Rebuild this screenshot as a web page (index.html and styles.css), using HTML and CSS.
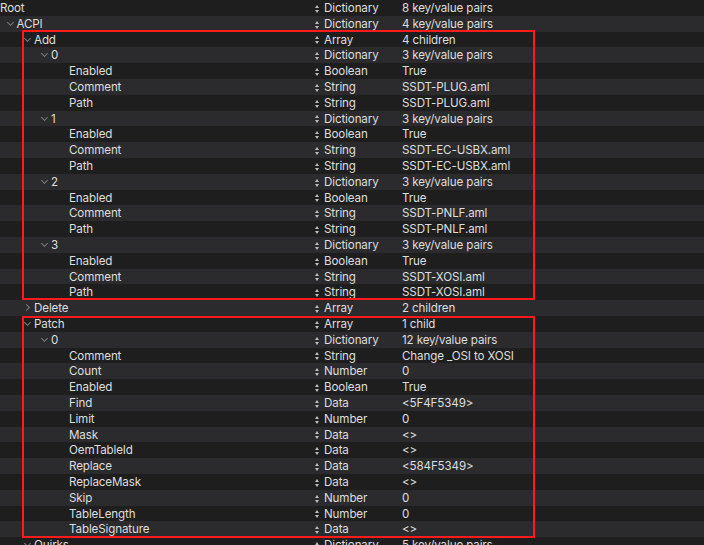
FILE: index.html
```html
<!DOCTYPE html>
<html>
<head>
<meta charset="utf-8">
<link rel="stylesheet" href="styles.css">
</head>
<body>
<div class="outline">
  <div class="row"><div class="key l0">Root</div><div class="type"><i class="ud"></i>Dictionary</div><div class="val">8 key/value pairs</div></div>
  <div class="row"><div class="key l1"><i class="chev down"></i>ACPI</div><div class="type"><i class="ud"></i>Dictionary</div><div class="val">4 key/value pairs</div></div>
  <div class="row"><div class="key l2"><i class="chev down"></i>Add</div><div class="type"><i class="ud"></i>Array</div><div class="val">4 children</div></div>
  <div class="row"><div class="key l3"><i class="chev down"></i>0</div><div class="type"><i class="ud"></i>Dictionary</div><div class="val">3 key/value pairs</div></div>
  <div class="row"><div class="key l4">Enabled</div><div class="type"><i class="ud"></i>Boolean</div><div class="val">True</div></div>
  <div class="row"><div class="key l4">Comment</div><div class="type"><i class="ud"></i>String</div><div class="val">SSDT-PLUG.aml</div></div>
  <div class="row"><div class="key l4">Path</div><div class="type"><i class="ud"></i>String</div><div class="val">SSDT-PLUG.aml</div></div>
  <div class="row"><div class="key l3"><i class="chev down"></i>1</div><div class="type"><i class="ud"></i>Dictionary</div><div class="val">3 key/value pairs</div></div>
  <div class="row"><div class="key l4">Enabled</div><div class="type"><i class="ud"></i>Boolean</div><div class="val">True</div></div>
  <div class="row"><div class="key l4">Comment</div><div class="type"><i class="ud"></i>String</div><div class="val">SSDT-EC-USBX.aml</div></div>
  <div class="row"><div class="key l4">Path</div><div class="type"><i class="ud"></i>String</div><div class="val">SSDT-EC-USBX.aml</div></div>
  <div class="row"><div class="key l3"><i class="chev down"></i>2</div><div class="type"><i class="ud"></i>Dictionary</div><div class="val">3 key/value pairs</div></div>
  <div class="row"><div class="key l4">Enabled</div><div class="type"><i class="ud"></i>Boolean</div><div class="val">True</div></div>
  <div class="row"><div class="key l4">Comment</div><div class="type"><i class="ud"></i>String</div><div class="val">SSDT-PNLF.aml</div></div>
  <div class="row"><div class="key l4">Path</div><div class="type"><i class="ud"></i>String</div><div class="val">SSDT-PNLF.aml</div></div>
  <div class="row"><div class="key l3"><i class="chev down"></i>3</div><div class="type"><i class="ud"></i>Dictionary</div><div class="val">3 key/value pairs</div></div>
  <div class="row"><div class="key l4">Enabled</div><div class="type"><i class="ud"></i>Boolean</div><div class="val">True</div></div>
  <div class="row"><div class="key l4">Comment</div><div class="type"><i class="ud"></i>String</div><div class="val">SSDT-XOSI.aml</div></div>
  <div class="row"><div class="key l4">Path</div><div class="type"><i class="ud"></i>String</div><div class="val">SSDT-XOSI.aml</div></div>
  <div class="row"><div class="key l2"><i class="chev right"></i>Delete</div><div class="type"><i class="ud"></i>Array</div><div class="val">2 children</div></div>
  <div class="row"><div class="key l2"><i class="chev down"></i>Patch</div><div class="type"><i class="ud"></i>Array</div><div class="val">1 child</div></div>
  <div class="row"><div class="key l3"><i class="chev down"></i>0</div><div class="type"><i class="ud"></i>Dictionary</div><div class="val">12 key/value pairs</div></div>
  <div class="row"><div class="key l4">Comment</div><div class="type"><i class="ud"></i>String</div><div class="val">Change _OSI to XOSI</div></div>
  <div class="row"><div class="key l4">Count</div><div class="type"><i class="ud"></i>Number</div><div class="val">0</div></div>
  <div class="row"><div class="key l4">Enabled</div><div class="type"><i class="ud"></i>Boolean</div><div class="val">True</div></div>
  <div class="row"><div class="key l4">Find</div><div class="type"><i class="ud"></i>Data</div><div class="val">&lt;5F4F5349&gt;</div></div>
  <div class="row"><div class="key l4">Limit</div><div class="type"><i class="ud"></i>Number</div><div class="val">0</div></div>
  <div class="row"><div class="key l4">Mask</div><div class="type"><i class="ud"></i>Data</div><div class="val">&lt;&gt;</div></div>
  <div class="row"><div class="key l4">OemTableId</div><div class="type"><i class="ud"></i>Data</div><div class="val">&lt;&gt;</div></div>
  <div class="row"><div class="key l4">Replace</div><div class="type"><i class="ud"></i>Data</div><div class="val">&lt;584F5349&gt;</div></div>
  <div class="row"><div class="key l4">ReplaceMask</div><div class="type"><i class="ud"></i>Data</div><div class="val">&lt;&gt;</div></div>
  <div class="row"><div class="key l4">Skip</div><div class="type"><i class="ud"></i>Number</div><div class="val">0</div></div>
  <div class="row"><div class="key l4">TableLength</div><div class="type"><i class="ud"></i>Number</div><div class="val">0</div></div>
  <div class="row"><div class="key l4">TableSignature</div><div class="type"><i class="ud"></i>Data</div><div class="val">&lt;&gt;</div></div>
  <div class="row"><div class="key l2"><i class="chev down"></i>Quirks</div><div class="type"><i class="ud"></i>Dictionary</div><div class="val">5 key/value pairs</div></div>
  <div class="row"><div class="key l2">&nbsp;</div><div class="type"></div><div class="val"></div></div>

  <div class="mark mark-add"></div>
  <div class="mark mark-patch"></div>
</div>
</body>
</html>
```
FILE: styles.css
```css
html, body {
  margin: 0;
  padding: 0;
  background: #1e1e1e;
  overflow: hidden;
}
body {
  font-family: Inter, "Noto Sans", "Liberation Sans", sans-serif;
  font-size: 11.6px;
  letter-spacing: -0.12px;
  color: #dedede;
}
.outline {
  position: relative;
  width: 704px;
}
.row {
  display: grid;
  grid-template-columns: 314px 88px 1fr;
  height: 15.8px;
  line-height: 15.8px;
  white-space: nowrap;
}
.row > div {
  padding-top: 1px;
  box-sizing: border-box;
}
.row:nth-child(even) {
  background: #2b2b2d;
}
.key {
  display: flex;
  align-items: center;
  position: relative;
}
.l0 { padding-left: 0; }
.l1 { padding-left: 16.5px; }
.l2 { padding-left: 34px; }
.l3 { padding-left: 51px; }
.l4 { padding-left: 69px; }
.chev {
  position: absolute;
  top: 5px;
  width: 7px;
  height: 7px;
}
.l1 .chev { left: 6px; }
.l2 .chev { left: 23.5px; }
.l3 .chev { left: 40.5px; }
.chev::before {
  content: "";
  position: absolute;
  width: 4px;
  height: 4px;
  border-right: 1px solid #7a7a7a;
  border-bottom: 1px solid #7a7a7a;
}
.chev.down::before {
  left: 1.5px;
  top: -1px;
  transform: rotate(45deg);
}
.chev.right::before {
  left: 0;
  top: 0;
  transform: rotate(-45deg);
}
.type {
  display: flex;
  align-items: center;
}
.ud {
  position: relative;
  width: 5px;
  height: 8px;
  margin-left: 1px;
  margin-right: 4px;
  flex: none;
}
.ud::before, .ud::after {
  content: "";
  position: absolute;
  left: 0;
  border-left: 2.5px solid transparent;
  border-right: 2.5px solid transparent;
}
.ud::before {
  top: 0;
  border-bottom: 3px solid #bdbdbd;
}
.ud::after {
  bottom: 0;
  border-top: 3px solid #bdbdbd;
}
.val {
  padding-left: 0;
}
.mark {
  position: absolute;
  border: 2px solid #ff1b1b;
  box-sizing: border-box;
  pointer-events: none;
}
.mark-add {
  left: 22px;
  top: 30px;
  width: 513px;
  height: 270px;
}
.mark-patch {
  left: 22px;
  top: 316px;
  width: 513px;
  height: 222px;
}
```
